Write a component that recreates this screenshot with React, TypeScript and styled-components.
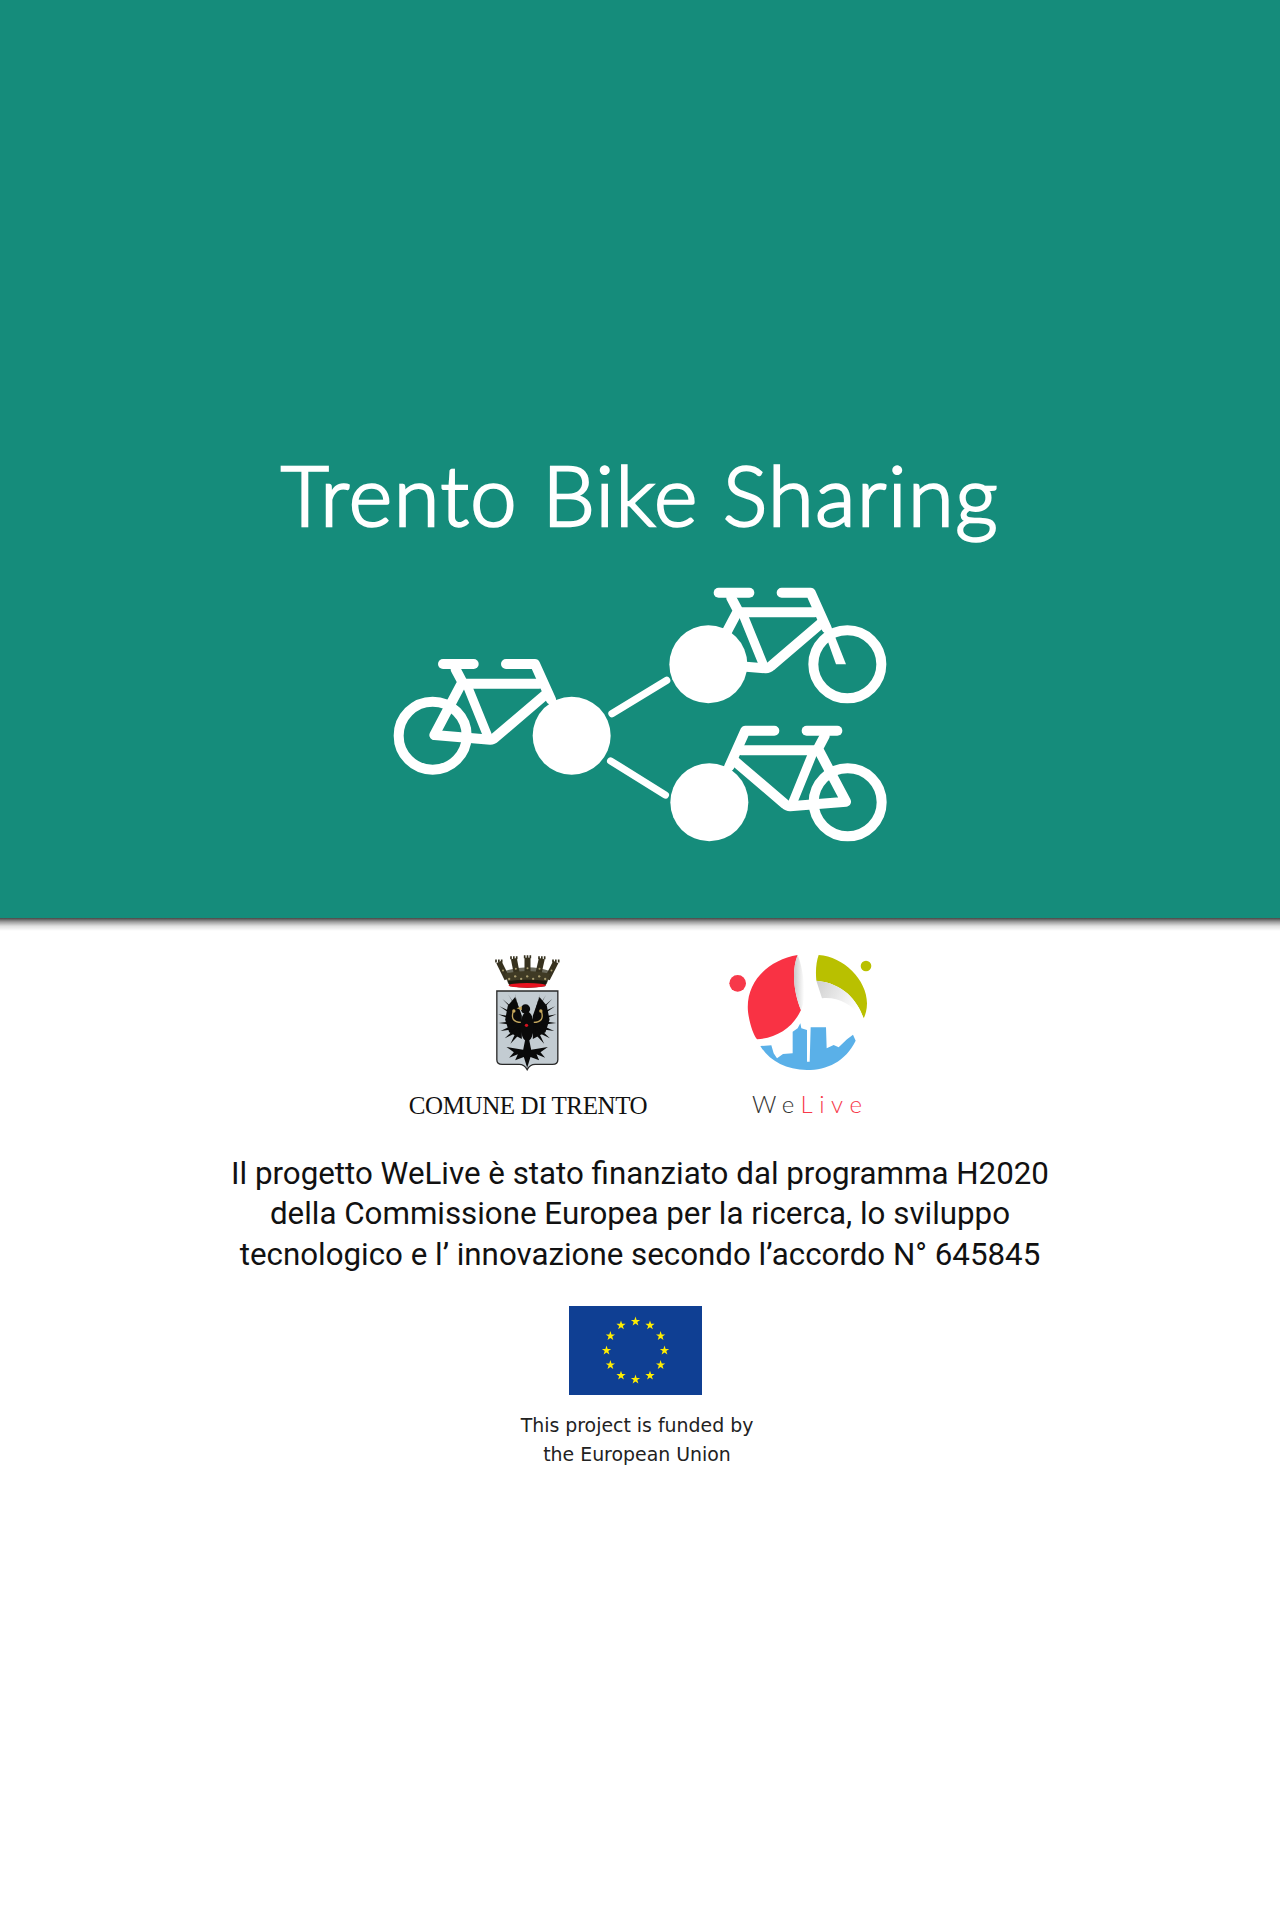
import React from "react";
import styled, { createGlobalStyle } from "styled-components";

const Global = createGlobalStyle`
  html, body { margin: 0; padding: 0; background: #fff; }
  #root { width: 1280px; height: 1920px; overflow: hidden; }
`;

const Page = styled.div`
  width: 1280px;
  height: 1920px;
  display: flex;
  flex-direction: column;
  align-items: center;
  background: #fff;
`;

const Hero = styled.header`
  position: relative;
  width: 100%;
  height: 918px;
  flex: none;
  background: #158c7b;
  display: flex;
  flex-direction: column;
  align-items: center;
  padding-top: 444px;
  box-sizing: border-box;

  &::after {
    content: "";
    position: absolute;
    left: 0;
    right: 0;
    top: 100%;
    height: 13px;
    background: linear-gradient(
      to bottom,
      rgba(0, 0, 0, 0.72),
      rgba(0, 0, 0, 0.38) 30%,
      rgba(0, 0, 0, 0.12) 62%,
      rgba(0, 0, 0, 0)
    );
  }
`;

const Title = styled.h1`
  margin: 0;
  height: 100px;
  font-family: "Lato", "Liberation Sans", sans-serif;
  font-weight: 300;
  font-size: 83px;
  line-height: 100px;
  letter-spacing: 1.6px;
  color: #fff;
  white-space: nowrap;
  -webkit-text-stroke: 2.5px #fff;
`;

const Diagram = styled.svg`
  display: block;
  margin-top: 26px;
  flex: none;
`;

const Logos = styled.div`
  display: flex;
  align-items: flex-start;
  margin-top: 34px;
  padding-left: 6px;
  gap: 80px;
`;

const LogoColumn = styled.div`
  display: flex;
  flex-direction: column;
  align-items: center;
`;

const Arms = styled.svg`
  display: block;
  margin-top: 1px;
`;

const ComuneName = styled.div`
  margin-top: 19px;
  font-family: "Liberation Serif", "Times New Roman", serif;
  font-size: 25px;
  line-height: 32px;
  letter-spacing: -0.4px;
  color: #111;
  white-space: nowrap;
`;

const WeLiveName = styled.div`
  margin-top: 12px;
  margin-left: 16px;
  font-family: "Lato", "Liberation Sans", sans-serif;
  font-weight: 300;
  font-size: 24px;
  line-height: 30px;
  letter-spacing: 6.6px;
  color: #333;
`;

const Accent = styled.span`
  color: #f7394a;
`;

const Statement = styled.p`
  margin: 32px 0 0;
  font-family: Roboto, "Liberation Sans", sans-serif;
  font-size: 31.3px;
  line-height: 40.4px;
  color: #111;
  text-align: center;
  white-space: nowrap;
`;

const Flag = styled.svg`
  display: block;
  margin-top: 31px;
  margin-left: -10px;
`;

const Caption = styled.p`
  margin: 16px 0 0;
  margin-left: -6px;
  font-family: "DejaVu Sans", Verdana, sans-serif;
  font-size: 18.9px;
  line-height: 29px;
  color: #222;
  text-align: center;
  white-space: nowrap;
`;

const Frame = () => (
  <g fill="none" stroke="#fff" strokeWidth={30} strokeLinecap="round" strokeLinejoin="round">
    <path d="M1016 68H1108" />
    <path d="M1205 68H1292L1340 175" />
    <path d="M1326 165L1368 283H1398L1354 172Z" fill="#fff" stroke="none" />
    <path d="M1054 84L1074 122L990 281L1158 295Q1166 295 1172 289L1322 161" />
    <path d="M1082 127H1305" />
    <path d="M1090 136L1150 284" strokeWidth={27} />
  </g>
);

const Ring = ({ x, y }: { x: number; y: number }) => (
  <circle cx={x} cy={y} r={102} fill="none" stroke="#fff" strokeWidth={30} />
);

const Solid = ({ x, y }: { x: number; y: number }) => <circle cx={x} cy={y} r={117} fill="#fff" />;

const BikeDiagram = () => (
  <Diagram width={520} height={280} viewBox="0 0 1560 840">
    <Frame />
    <Solid x={985} y={283} />
    <Ring x={1402} y={283} />
    <g transform="translate(-827 214)">
      <Frame />
    </g>
    <Ring x={158} y={497} />
    <Solid x={575} y={497} />
    <g transform="translate(1561 200) scale(-1 1) translate(-827 214)">
      <Frame />
    </g>
    <Ring x={1403} y={697} />
    <Solid x={988} y={697} />
    <g stroke="#fff" strokeWidth={22} strokeLinecap="round">
      <line x1={696} y1={431} x2={860} y2={331} />
      <line x1={692} y1={573} x2={856} y2={675} />
    </g>
  </Diagram>
);

const featherTips: [number, number][] = [
  [375, 252], [356, 255], [338, 268], [329, 290], [325, 314], [326, 340], [332, 364], [345, 386], [362, 402],
];

const Wing = () => (
  <g fill="#0a0a0a">
    <path d="M376 262L354 288L346 330L358 368L396 388V318Z" />
    {featherTips.map(([x, y], i) => {
      const by = 300 + i * 8;
      return <polygon key={i} points={`${x},${y} 384,${by - 8} 390,${by + 8}`} />;
    })}
    <path d="M370 306C364 326 370 338 394 338" fill="none" stroke="#c3a65e" strokeWidth={4} />
    <circle cx={372} cy={304} r={5} fill="#c9a95a" />
  </g>
);

const crownTowers: [number, number, number, number, number][] = [
  [327, 157, 352, 208, 17],
  [372, 147, 384, 208, 18],
  [413, 144, 413, 208, 18],
  [456, 147, 442, 208, 18],
  [498, 157, 472, 208, 17],
];

const CoatOfArms = () => (
  <Arms width={69} height={118} viewBox="310 130 206 354">
    <path d="M340 186Q413 160 486 186L470 224H356Z" fill="#6b6a5c" />
    {crownTowers.map(([x, y, bx, by, w], i) => (
      <g key={i}>
        <line x1={x} y1={y} x2={bx} y2={by} stroke="#37321f" strokeWidth={w} />
        <line x1={x - 11} y1={y - 3} x2={x + 11} y2={y - 3} stroke="#37321f" strokeWidth={9} strokeDasharray="5 3.5" />
        <circle cx={(x + bx) / 2} cy={(y + by) / 2} r={3} fill="#a89c6e" />
      </g>
    ))}
    <path d="M344 192Q413 176 482 192L468 222H358Z" fill="#3f3a24" />
    {[358, 376, 394, 412, 430, 448, 466].map((x, i) => (
      <circle key={x} cx={x} cy={i % 2 ? 200 : 208} r={3.5} fill="#a89c6e" />
    ))}
    <path d="M354 214Q413 206 472 214L466 230Q413 238 360 230Z" fill="#1c1a0e" />
    <ellipse cx={412} cy={227} rx={56} ry={7} fill="#e8121f" />
    <path
      d="M321 244H504V450Q504 464 488 464H436Q420 464 412 480Q404 464 388 464H337Q321 464 321 450Z"
      fill="#c3ccd2"
      stroke="#2a2a2a"
      strokeWidth={4}
    />
    <Wing />
    <g transform="translate(825 0) scale(-1 1)">
      <Wing />
    </g>
    <circle cx={407} cy={298} r={14} fill="#0a0a0a" />
    <ellipse cx={412} cy={350} rx={20} ry={44} fill="#0a0a0a" />
    <path d="M396 290L380 296L396 302Z" fill="#c9a95a" />
    <path d="M406 390L400 420L350 412L372 428L358 444L384 434L376 452L402 442L412 474L422 442L448 452L440 434L466 444L452 428L474 412L424 420L418 390Z" fill="#0a0a0a" />
    <circle cx={410} cy={347} r={5} fill="#d3121f" />
  </Arms>
);

const WeLiveLogo = () => (
  <svg width={150} height={125} viewBox="50 36 450 375">
    <defs>
      <linearGradient id="foldA" x1="0" x2="1" y1="0" y2="0">
        <stop offset="0" stopColor="#c9c9c9" />
        <stop offset="1" stopColor="#ffffff" />
      </linearGradient>
      <linearGradient id="foldB" x1="0" x2="1" y1="0" y2="0.4">
        <stop offset="0" stopColor="#cfcfcf" />
        <stop offset="1" stopColor="#ffffff" />
      </linearGradient>
    </defs>
    <circle cx={82} cy={130} r={25} fill="#f7394a" />
    <circle cx={467} cy={78} r={16} fill="#b9c000" />
    <path
      d="M262 45C170 60 105 130 113 215C118 255 130 285 140 298C200 295 250 260 272 210C255 170 240 100 262 45Z"
      fill="#f93244"
    />
    <path d="M262 45C240 100 255 170 272 210C290 170 280 90 262 45Z" fill="url(#foldA)" />
    <path
      d="M325 45C400 50 470 120 470 190C470 210 465 225 460 235C440 180 400 130 318 122C315 90 318 65 325 45Z"
      fill="#b9c000"
    />
    <path d="M318 122C400 130 440 180 460 235C420 190 380 170 335 175Z" fill="url(#foldB)" />
    <path
      d="M150 318L183 316L190 340L200 355L218 342L247 340V275L262 265L270 250L273 265L290 270V365H298L301 262H347L349 325L370 315L385 322L410 298L428 284L436 302C405 365 350 390 290 390C225 390 175 360 150 318Z"
      fill="#5ab0e8"
    />
  </svg>
);

const stars = Array.from({ length: 12 }, (_, i) => {
  const a = (i * Math.PI) / 6;
  const cx = 66.5 + 29 * Math.sin(a);
  const cy = 44.5 - 29 * Math.cos(a);
  const pts = Array.from({ length: 10 }, (_, k) => {
    const r = k % 2 ? 1.9 : 4.9;
    const t = (k * Math.PI) / 5;
    return `${(cx + r * Math.sin(t)).toFixed(2)},${(cy - r * Math.cos(t)).toFixed(2)}`;
  }).join(" ");
  return pts;
});

const EuFlag = () => (
  <Flag width={133} height={89} viewBox="0 0 133 89">
    <rect width={133} height={89} fill="#0f3f93" />
    {stars.map((p, i) => (
      <polygon key={i} points={p} fill="#ffed00" />
    ))}
  </Flag>
);

export default function App() {
  return (
    <Page>
      <Global />
      <Hero>
        <Title>Trento Bike Sharing</Title>
        <BikeDiagram />
      </Hero>
      <Logos>
        <LogoColumn>
          <CoatOfArms />
          <ComuneName>COMUNE DI TRENTO</ComuneName>
        </LogoColumn>
        <LogoColumn>
          <WeLiveLogo />
          <WeLiveName>
            We<Accent>Live</Accent>
          </WeLiveName>
        </LogoColumn>
      </Logos>
      <Statement>
        Il progetto WeLive è stato finanziato dal programma H2020
        <br />
        della Commissione Europea per la ricerca, lo sviluppo
        <br />
        tecnologico e l’ innovazione secondo l’accordo N° 645845
      </Statement>
      <EuFlag />
      <Caption>
        This project is funded by
        <br />
        the European Union
      </Caption>
    </Page>
  );
}
